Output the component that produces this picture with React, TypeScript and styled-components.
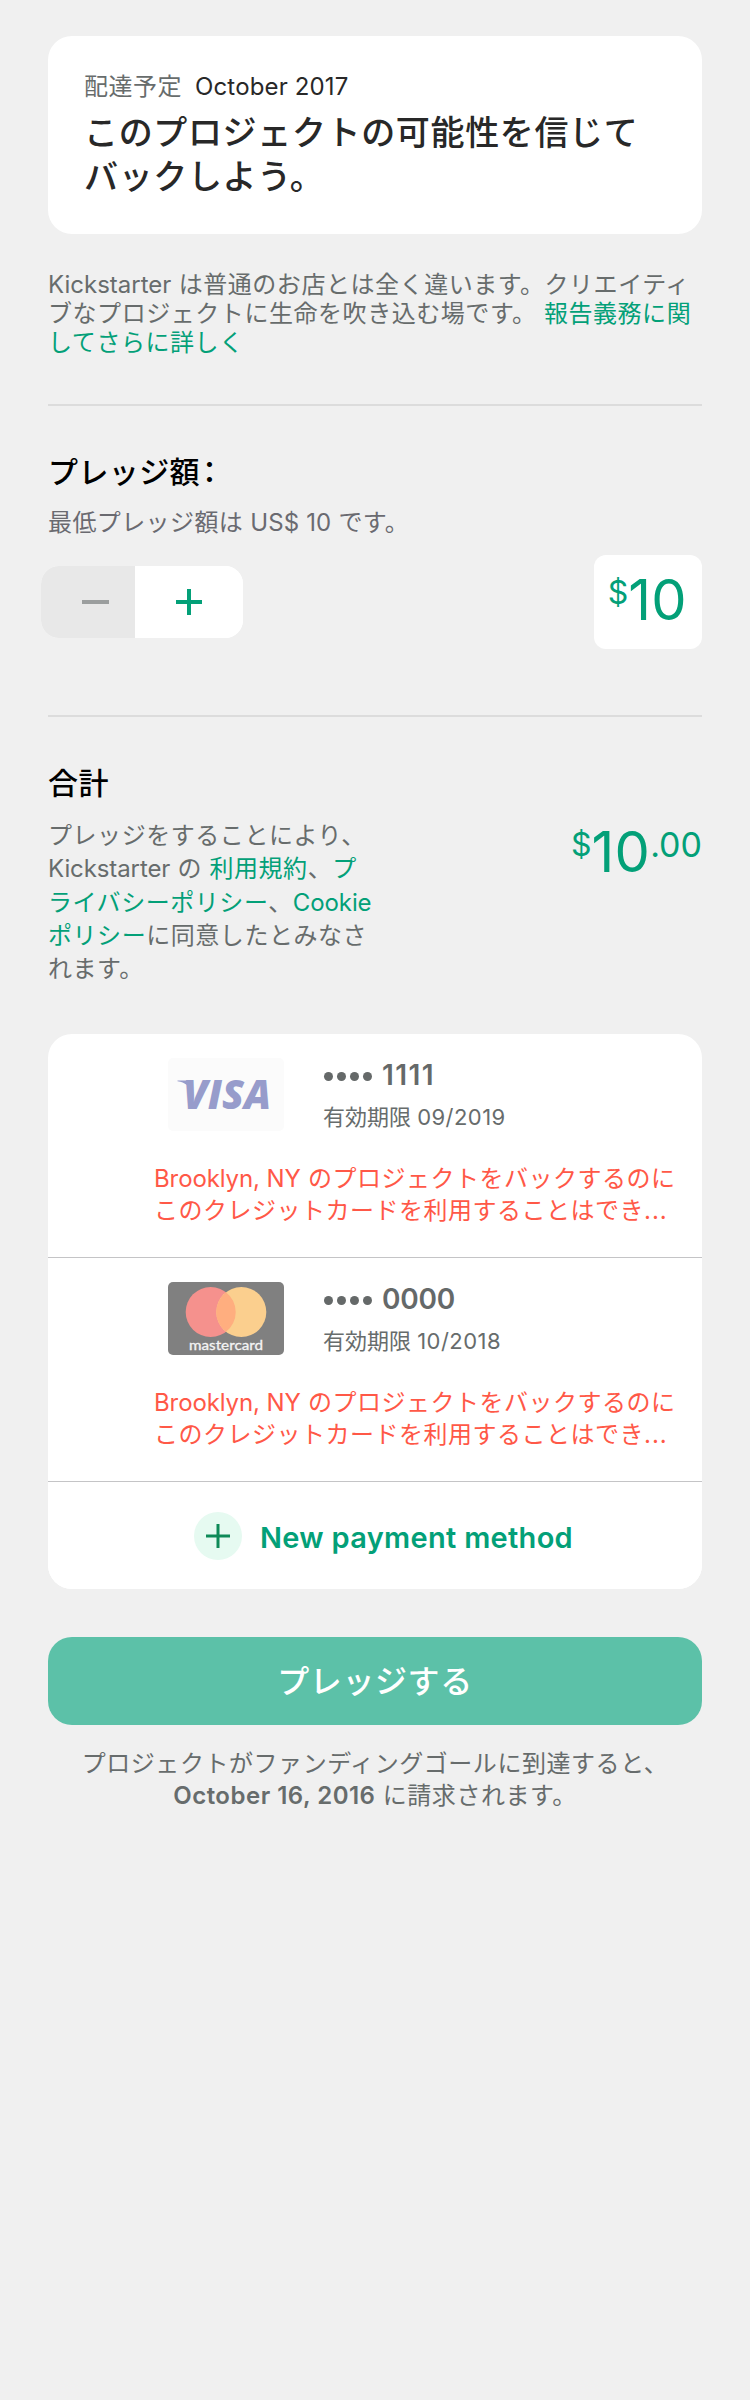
import React from "react";
import styled, { createGlobalStyle } from "styled-components";

const GREEN = "#03a078";
const GRAY = "#676c6c";

const GlobalStyle = createGlobalStyle`
  body {
    margin: 0;
    background: #f0f0f0;
    font-family: "Inter", "Noto Sans CJK JP", sans-serif;
    -webkit-font-smoothing: antialiased;
  }
  * { box-sizing: border-box; }
  p, h1, h2 { margin: 0; font-weight: 400; }
  button { border: 0; padding: 0; font: inherit; }
`;

const Page = styled.main`
  width: 750px;
  min-height: 2400px;
  padding: 36px 48px 0;
  background: #f0f0f0;
`;

const Latin = styled.span<{ $track?: number; $weight?: number }>`
  letter-spacing: ${({ $track = 0 }) => $track}px;
  font-weight: ${({ $weight }) => $weight ?? "inherit"};
`;

const Link = styled.a`
  color: ${GREEN};
`;

const RewardCard = styled.section`
  height: 198px;
  padding: 36px;
  border-radius: 24px;
  background: #fff;
`;

const Delivery = styled.p`
  display: flex;
  gap: 13px;
  font-size: 24px;
  line-height: 29px;
  letter-spacing: 0.5px;
  color: ${GRAY};
`;

const DeliveryDate = styled(Latin)`
  color: #282828;
`;

const RewardTitle = styled.h1`
  margin-top: 10px;
  font-size: 34px;
  font-weight: 500;
  line-height: 44px;
  letter-spacing: 0.65px;
  white-space: nowrap;
  color: #282828;
`;

const Copy = styled.p<{ $leading: number }>`
  font-size: 24px;
  line-height: ${({ $leading }) => $leading}px;
  letter-spacing: 0.55px;
  white-space: nowrap;
  color: ${GRAY};
`;

const Intro = styled(Copy)`
  margin-top: 36px;
`;

const Divider = styled.hr<{ $top: number }>`
  height: 2px;
  margin: ${({ $top }) => $top}px 0 46px;
  border: 0;
  background: #dcdcdc;
`;

const Heading = styled.h2`
  font-size: 30px;
  font-weight: 500;
  line-height: 40px;
  letter-spacing: 0.4px;
  color: #000;
`;

const Colon = styled.span`
  padding-left: 2px;
  font-family: "Noto Sans CJK JP", sans-serif;
  font-feature-settings: "halt";
  line-height: 1;
`;

const Minimum = styled(Copy)`
  margin-top: 16px;
  letter-spacing: 0.4px;
  color: #6a6a70;
`;

const AmountRow = styled.div`
  display: flex;
  align-items: center;
  justify-content: space-between;
  height: 94px;
  margin: 17px 0 0 -7px;
`;

const Stepper = styled.div`
  display: flex;
  width: 202px;
  height: 72px;
  overflow: hidden;
  border-radius: 18px;
  background: #fff;
`;

const StepButton = styled.button<{ $muted?: boolean }>`
  display: flex;
  align-items: center;
  width: ${({ $muted }) => ($muted ? 94 : 108)}px;
  padding-left: 41px;
  color: ${({ $muted }) => ($muted ? "#9b9e9e" : GREEN)};
  background: ${({ $muted }) => ($muted ? "#e8e8e8" : "#fff")};
`;

const AmountField = styled.div`
  display: flex;
  justify-content: flex-end;
  width: 108px;
  height: 94px;
  padding: 17px 15px 0 0;
  border-radius: 12px;
  background: #fff;
`;

const Money = styled.div`
  display: flex;
  align-items: flex-start;
  color: ${GREEN};
`;

const Units = styled.span`
  font-size: 56px;
  line-height: 56px;
  letter-spacing: 0.3px;
`;

const Small = styled.span<{ $size: number }>`
  font-size: ${({ $size }) => $size}px;
  line-height: 44px;
  margin-top: -1px;
`;

const TotalRow = styled.div`
  display: flex;
  justify-content: space-between;
  height: 215px;
  margin-top: 16px;
`;

const TotalMoney = styled(Money)`
  margin-top: 5px;
`;

const CardList = styled.section`
  overflow: hidden;
  border-radius: 24px;
  background: #fff;
`;

const CardRow = styled.article`
  display: flex;
  flex-direction: column;
  height: 224px;
  padding: 24px 0 0 106px;
  border-bottom: 1px solid #c4c4c6;
`;

const CardTop = styled.div`
  display: flex;
  gap: 39px;
  padding-left: 14px;
`;

const CardInfo = styled.div`
  display: flex;
  flex-direction: column;
  gap: 11px;
`;

const CardNumber = styled.p`
  display: flex;
  align-items: center;
  gap: 10px;
  font-size: 28px;
  font-weight: 600;
  line-height: 34px;
  color: #656969;
`;

const Dots = styled.span`
  display: flex;
  gap: 4px;
  padding: 3px 0 0 1px;
`;

const Dot = styled.i`
  width: 9px;
  height: 9px;
  border-radius: 50%;
  background: #656969;
`;

const Expiry = styled.p`
  font-size: 22px;
  line-height: 28px;
  color: ${GRAY};
`;

const CardError = styled(Copy)`
  margin-top: 32px;
  letter-spacing: 0.5px;
  color: #ff5847;
`;

const NewMethod = styled.button`
  display: flex;
  align-items: center;
  gap: 18px;
  width: 100%;
  height: 107px;
  padding-left: 146px;
  background: #fff;
  color: ${GREEN};
  font-size: 29px;
  font-weight: 600;
`;

const MethodLabel = styled(Latin)`
  padding-top: 3px;
`;

const PledgeButton = styled.button`
  display: block;
  width: 100%;
  height: 88px;
  margin-top: 48px;
  padding-bottom: 5px;
  border-radius: 24px;
  background: #5cc1a8;
  color: #fff;
  font-size: 32px;
  font-weight: 500;
  letter-spacing: 0.6px;
`;

const ChargeNote = styled(Copy)`
  margin-top: 23px;
  text-align: center;
`;

function VisaLogo() {
  return (
    <svg width="116" height="73" viewBox="0 0 116 73">
      <rect width="116" height="73" rx="5" fill="#fbfbfb" />
      <path d="M9.500 22.500h12l4 13C22 28 17 24.500 9.500 23.300z" fill="#979ccb" />
      <text x="15" y="51" fontFamily="Open Sans" fontSize="40" fontWeight="800" fontStyle="italic" textLength="88" lengthAdjust="spacingAndGlyphs" fill="#979ccb">
        VISA
      </text>
    </svg>
  );
}

function MastercardLogo() {
  return (
    <svg width="116" height="73" viewBox="0 0 116 73">
      <rect width="116" height="73" rx="5" fill="#808080" />
      <circle cx="42.700" cy="30" r="25" fill="#f5918d" />
      <circle cx="73.300" cy="30" r="25" fill="#fbcf8e" />
      <path d="M58 10.200a25 25 0 0 1 0 39.600a25 25 0 0 1 0-39.600z" fill="#ffae7f" />
      <text x="21" y="67.600" fontFamily="Lato" fontSize="13.500" textLength="74" lengthAdjust="spacingAndGlyphs" fill="#f4f4f4" stroke="#f4f4f4" strokeWidth="0.300">
        mastercard
      </text>
    </svg>
  );
}

function PlusBadge() {
  return (
    <svg width="48" height="48" viewBox="0 0 48 48">
      <circle cx="24" cy="24" r="24" fill="#e6faf1" />
      <path d="M24 12v24M12 24h24" stroke="#0e8a58" strokeWidth="3" />
    </svg>
  );
}

function Card({ logo, digits, track, expires }: {
  logo: React.ReactNode;
  digits: string;
  track: number;
  expires: string;
}) {
  return (
    <CardRow>
      <CardTop>
        {logo}
        <CardInfo>
          <CardNumber>
            <Dots><Dot /><Dot /><Dot /><Dot /></Dots>
            <Latin $track={track}>{digits}</Latin>
          </CardNumber>
          <Expiry>有効期限 <Latin $track={0.45}>{expires}</Latin></Expiry>
        </CardInfo>
      </CardTop>
      <CardError $leading={32}>
        <Latin $track={-0.1}>Brooklyn, NY</Latin> のプロジェクトをバックするのに<br />
        このクレジットカードを利用することはでき<Latin $track={1}>...</Latin>
      </CardError>
    </CardRow>
  );
}

export default function App() {
  return (
    <Page>
      <GlobalStyle />
      <RewardCard>
        <Delivery>
          <span>配達予定</span>
          <DeliveryDate $track={0.15}>October 2017</DeliveryDate>
        </Delivery>
        <RewardTitle>このプロジェクトの可能性を信じて<br />バックしよう。</RewardTitle>
      </RewardCard>

      <Intro $leading={29}>
        <Latin>Kickstarter</Latin> は普通のお店とは全く違います。クリエイティ<br />
        ブなプロジェクトに生命を吹き込む場です。 <Link>報告義務に関<br />してさらに詳しく</Link>
      </Intro>
      <Divider $top={47} />

      <Heading>プレッジ額<Colon>：</Colon></Heading>
      <Minimum $leading={30}>最低プレッジ額は <Latin $track={0.1}>US$ 10</Latin> です。</Minimum>
      <AmountRow>
        <Stepper>
          <StepButton $muted aria-label="減らす">
            <svg width="27" height="28" viewBox="0 0 27 28"><path d="M0 14h27" stroke="currentColor" strokeWidth="4" /></svg>
          </StepButton>
          <StepButton aria-label="増やす">
            <svg width="27" height="28" viewBox="0 0 27 28"><path d="M0 14h26M13 1v26" stroke="currentColor" strokeWidth="4" /></svg>
          </StepButton>
        </Stepper>
        <AmountField>
          <Money><Small $size={32}>$</Small><Units>10</Units></Money>
        </AmountField>
      </AmountRow>
      <Divider $top={66} />

      <Heading>合計</Heading>
      <TotalRow>
        <Copy $leading={33.3}>
          プレッジをすることにより、<br />
          <Latin $track={-0.1}>Kickstarter</Latin> の <Link>利用規約</Link>、<Link>プ<br />ライバシーポリシー</Link>、<Link><Latin $track={-0.1}>Cookie</Latin><br />ポリシー</Link>に同意したとみなさ<br />
          れます。
        </Copy>
        <TotalMoney>
          <Small $size={32}>$</Small><Units>10</Units><Small $size={34}>.00</Small>
        </TotalMoney>
      </TotalRow>

      <CardList>
        <Card logo={<VisaLogo />} digits="1111" track={1.4} expires="09/2019" />
        <Card logo={<MastercardLogo />} digits="0000" track={-0.2} expires="10/2018" />
        <NewMethod><PlusBadge /><MethodLabel $track={0.3}>New payment method</MethodLabel></NewMethod>
      </CardList>

      <PledgeButton>プレッジする</PledgeButton>
      <ChargeNote $leading={32}>
        プロジェクトがファンディングゴールに到達すると、<br />
        <Latin $weight={600} $track={0.5}>October 16, 2016</Latin> に請求されます。
      </ChargeNote>
    </Page>
  );
}
